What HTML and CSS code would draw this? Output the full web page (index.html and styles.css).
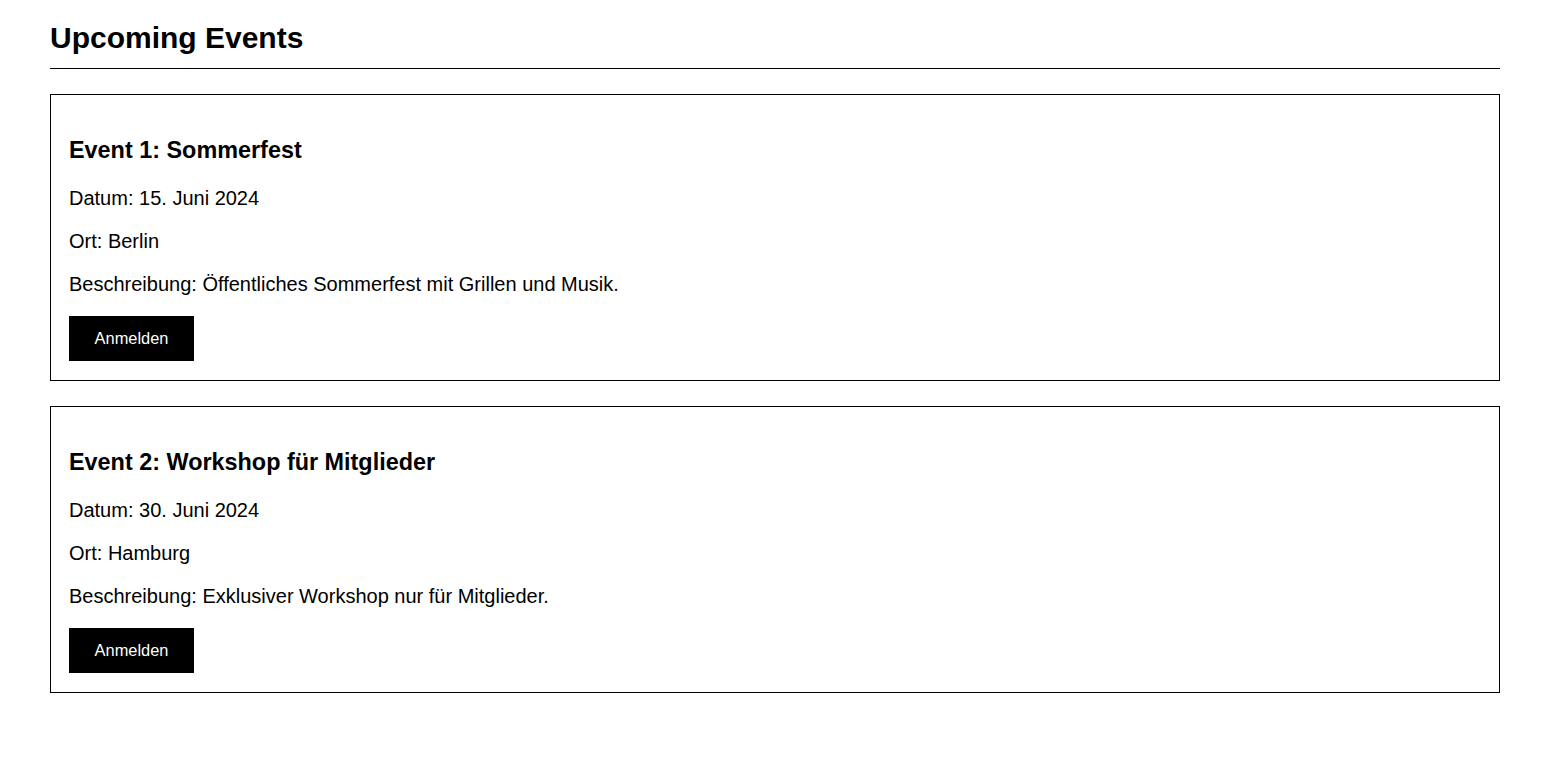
FILE: index.html
```html
<!DOCTYPE html>
<html lang="de">
<head>
<meta charset="utf-8">
<title>Upcoming Events</title>
<link rel="stylesheet" href="styles.css">
</head>
<body>
<main class="page">
  <h2 class="page-title">Upcoming Events</h2>
  <section class="event">
    <h3 class="event-title">Event 1: Sommerfest</h3>
    <p class="event-line">Datum: 15. Juni 2024</p>
    <p class="event-line">Ort: Berlin</p>
    <p class="event-line">Beschreibung: Öffentliches Sommerfest mit Grillen und Musik.</p>
    <button class="event-btn" type="button">Anmelden</button>
  </section>
  <section class="event">
    <h3 class="event-title">Event 2: Workshop für Mitglieder</h3>
    <p class="event-line">Datum: 30. Juni 2024</p>
    <p class="event-line">Ort: Hamburg</p>
    <p class="event-line">Beschreibung: Exklusiver Workshop nur für Mitglieder.</p>
    <button class="event-btn" type="button">Anmelden</button>
  </section>
</main>
</body>
</html>
```
FILE: styles.css
```css
html, body {
  margin: 0;
  padding: 0;
  background: #fff;
}
body {
  font-family: "Liberation Sans", Arial, sans-serif;
  color: #000;
}
.page {
  padding: 21px 60px 40px 50px;
}
.page-title {
  margin: 0;
  padding: 0 0 13px 0;
  font-size: 30px;
  line-height: 34px;
  font-weight: bold;
  border-bottom: 1px solid #000;
}
.event {
  margin-top: 25px;
  border: 1px solid #000;
  padding: 18px 18px 19px 18px;
}
.event-title {
  margin: 24px 0 23px 0;
  font-size: 23.4px;
  line-height: 27px;
  font-weight: bold;
}
.event-line {
  margin: 20px 0;
  font-size: 20px;
  line-height: 23px;
}
.event-btn {
  display: block;
  margin: 0;
  width: 125px;
  height: 45px;
  padding: 0;
  border: 0;
  background: #000;
  color: #fff;
  font-family: "Liberation Sans", Arial, sans-serif;
  font-size: 16.4px;
  cursor: pointer;
}
```
